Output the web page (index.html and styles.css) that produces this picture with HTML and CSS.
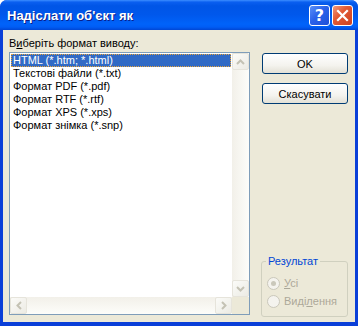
FILE: index.html
```html
<!DOCTYPE html>
<html lang="uk">

<head>
    <meta charset="UTF-8">
    <title>Надіслати об'єкт як</title>
    <link rel="stylesheet" href="styles.css">
</head>

<body>
    <div class="window">
        <div class="titlebar">
            <span class="title">Надіслати об'єкт як</span>
            <span class="tb-btn tb-help">?</span>
            <span class="tb-btn tb-close">
                <svg width="13" height="13" viewBox="0 0 13 13">
                    <path d="M2 2 L11 11 M11 2 L2 11" stroke="#fff" stroke-width="2.2" stroke-linecap="square"/>
                </svg>
            </span>
        </div>
        <div class="content">
            <div class="left-col">
                <div class="caption">В<u>и</u>беріть формат виводу:</div>
                <div class="listbox">
                    <ul class="items">
                        <li class="selected">HTML (*.htm; *.html)</li>
                        <li>Текстові файли (*.txt)</li>
                        <li>Формат PDF (*.pdf)</li>
                        <li>Формат RTF (*.rtf)</li>
                        <li>Формат XPS (*.xps)</li>
                        <li>Формат знімка (*.snp)</li>
                    </ul>
                    <div class="vscroll">
                        <span class="sb-btn">
                            <svg width="9" height="6" viewBox="0 0 9 6"><path d="M1 5 L4.5 1.5 L8 5" fill="none" stroke="#c4c2b4" stroke-width="2"/></svg>
                        </span>
                        <span class="sb-btn">
                            <svg width="9" height="6" viewBox="0 0 9 6"><path d="M1 1 L4.5 4.5 L8 1" fill="none" stroke="#c4c2b4" stroke-width="2"/></svg>
                        </span>
                    </div>
                    <div class="hscroll">
                        <span class="sb-btn">
                            <svg width="6" height="9" viewBox="0 0 6 9"><path d="M5 1 L1.5 4.5 L5 8" fill="none" stroke="#c4c2b4" stroke-width="2"/></svg>
                        </span>
                        <span class="sb-btn">
                            <svg width="6" height="9" viewBox="0 0 6 9"><path d="M1 1 L4.5 4.5 L1 8" fill="none" stroke="#c4c2b4" stroke-width="2"/></svg>
                        </span>
                    </div>
                    <div class="corner"></div>
                </div>
            </div>
            <div class="right-col">
                <button class="btn">OK</button>
                <button class="btn">Скасувати</button>
                <fieldset class="group">
                    <legend>Результат</legend>
                    <label class="radio"><span class="dot checked"></span><span><u>У</u>сі</span></label>
                    <label class="radio"><span class="dot"></span><span>Виді<u>л</u>ення</span></label>
                </fieldset>
            </div>
        </div>
    </div>
</body>

</html>
```

FILE: styles.css
```css
body{margin:0;font-family:"Liberation Sans",Arial,sans-serif;font-size:11px;}
ul{list-style:none;margin:0;padding:0;}

.window{
    width:358px;
    height:326px;
    display:flex;
    flex-direction:column;
    background:#0a3fd8;
    border-radius:7px 7px 0 0;
    overflow:hidden;
}

/* title bar */
.titlebar{
    flex:none;
    height:30px;
    display:flex;
    align-items:center;
    gap:2px;
    padding:0 5px 0 7px;
    background:linear-gradient(to bottom,#3c8eff 0%,#0a5ff0 7%,#0055e6 20%,#0058ec 50%,#0063fa 80%,#005df5 90%,#0046d4 100%);
}
.title{
    flex:1;
    color:#fff;
    font-weight:bold;
    font-size:13px;
    text-shadow:1px 1px 0 #0a1f8a;
}
.tb-btn{
    width:19px;
    height:19px;
    border:1px solid #fff;
    border-radius:3px;
    display:flex;
    align-items:center;
    justify-content:center;
    color:#fff;
}
.tb-help{
    background:linear-gradient(135deg,#5a90f8 0%,#2a62ea 45%,#1e4fd8 100%);
    font-weight:bold;
    font-size:16px;
    font-family:"DejaVu Sans",sans-serif;
}
.tb-close{background:linear-gradient(135deg,#f19a7e 0%,#e25a35 40%,#cc4120 100%);}

/* dialog body */
.content{
    flex:1;
    display:flex;
    gap:11px;
    margin:0 3px 4px 3px;
    padding:7px 7px 5px 6px;
    background:#ece9d8;
}
.left-col{display:flex;flex-direction:column;width:242px;}
.caption{line-height:13px;margin-bottom:2px;}

.listbox{
    flex:1;
    margin-bottom:2px;
    display:grid;
    grid-template-columns:1fr 17px;
    grid-template-rows:1fr 17px;
    border:1px solid #7f9db9;
    background:#fff;
}
.items{padding:1px;}
.items li{height:13px;line-height:13px;padding-left:2px;white-space:nowrap;}
.items .selected{
    background:#316ac5;
    color:#fff;
    border:1px dotted #e8a43a;
    height:11px;
    line-height:11px;
    padding-left:1px;
}

.vscroll,.hscroll{display:flex;justify-content:space-between;}
.vscroll{flex-direction:column;background:linear-gradient(to right,#f2f0e9,#fdfdfa);}
.hscroll{background:linear-gradient(to bottom,#f2f0e9,#fdfdfa);}
.sb-btn{
    width:15px;
    height:15px;
    border:1px solid #e6e4db;
    border-radius:2px;
    background:linear-gradient(135deg,#fbfbf8,#ecebe4);
    display:flex;
    align-items:center;
    justify-content:center;
}
.corner{background:#ece9d8;}

/* right column */
.right-col{display:flex;flex-direction:column;width:87px;}
.btn{
    width:86px;
    height:21px;
    margin-left:1px;
    padding:0;
    border:1px solid #003c74;
    border-radius:3px;
    background:linear-gradient(to bottom,#fff 0%,#f4f3ee 60%,#e3e1d6 100%);
    font:11px "Liberation Sans",Arial,sans-serif;
    color:#000;
}
.btn:first-child{margin-top:16px;margin-bottom:9px;}

.group{
    flex:none;
    margin:auto 0 0 0;
    padding:6px 0 6px 5px;
    border:1px solid #d0d0bf;
    border-radius:3px;
}
.group legend{padding:0 2px;margin-left:-1px;color:#0046d5;line-height:13px;}
.radio{display:flex;align-items:center;gap:4px;height:18px;color:#aca899;}
.dot{
    width:11px;
    height:11px;
    border:1px solid #cac8bb;
    border-radius:50%;
    background:#f4f3ee;
    display:flex;
    align-items:center;
    justify-content:center;
}
.dot.checked::after{content:"";width:5px;height:5px;border-radius:50%;background:#cac8bb;}
```
